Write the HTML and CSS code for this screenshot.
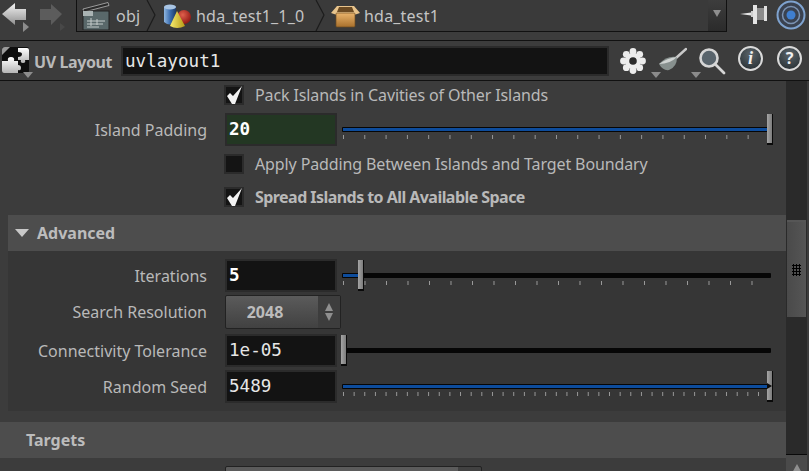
FILE: index.html
```html
<!DOCTYPE html>
<html lang="en">
<head>
    <meta charset="UTF-8">
    <meta name="viewport" content="width=device-width, initial-scale=1.0">
    <title>UV Layout</title>
    <link rel="stylesheet" href="styles.css">
</head>
<body>
    <div class="app">
        <!-- network path bar -->
        <div class="navbar">
            <div class="nav-arrows">
                <svg width="32" height="32" viewBox="0 0 32 32">
                    <defs>
                        <linearGradient id="backFill" x1="0" y1="0" x2="0" y2="1">
                            <stop offset="0" stop-color="#f4f4f4"/>
                            <stop offset="1" stop-color="#8f8f8f"/>
                        </linearGradient>
                    </defs>
                    <path d="M2 13 L15 2 V8 H26 V19 H15 V24 Z" fill="url(#backFill)"/>
                    <path d="M23 21 L29 26 L23 31 Z" fill="#8c8c8c"/>
                </svg>
                <svg width="32" height="32" viewBox="0 0 32 32">
                    <path d="M25 13 L14 3 V8 H3 V19 H14 V24 Z" fill="#5c5c5c"/>
                    <path d="M23 22 L28 26 L23 30 Z" fill="#484848"/>
                </svg>
            </div>
            <div class="pathbar">
                <div class="crumb crumb-obj">
                    <svg width="28" height="28" viewBox="0 0 28 28">
                        <path d="M1 7 L26 0.5 L27 3.5 L2 10 Z" fill="#2b2b2b" stroke="#b5b5b5" stroke-width="0.8"/>
                        <rect x="1" y="9" width="26" height="19" fill="#59686a" stroke="#222"/>
                        <rect x="1" y="9" width="10" height="5" fill="#aab4b4"/>
                        <path d="M5 19 H23 M5 22 H21 M5 25 H17 M9 16 V24 M15 17 V23" stroke="#c5cccb" stroke-width="1"/>
                    </svg>
                    <span>obj</span>
                </div>
                <svg class="chevron" width="10" height="31" viewBox="0 0 10 31">
                    <path d="M1 0 L9 15 L1 31" fill="none" stroke="#1c1c1c" stroke-width="1.2"/>
                </svg>
                <div class="crumb crumb-hda">
                    <svg width="30" height="28" viewBox="0 0 30 28">
                        <defs>
                            <linearGradient id="canFill" x1="0" y1="0" x2="1" y2="0">
                                <stop offset="0" stop-color="#8fb6e0"/>
                                <stop offset="0.5" stop-color="#3d6fb0"/>
                                <stop offset="1" stop-color="#1d3a66"/>
                            </linearGradient>
                            <radialGradient id="ballFill" cx="0.4" cy="0.35" r="0.7">
                                <stop offset="0" stop-color="#e0604c"/>
                                <stop offset="1" stop-color="#8c1512"/>
                            </radialGradient>
                            <linearGradient id="coneFill" x1="0" y1="0" x2="1" y2="0">
                                <stop offset="0" stop-color="#f7ec70"/>
                                <stop offset="1" stop-color="#b79b16"/>
                            </linearGradient>
                        </defs>
                        <path d="M1 5 V20 Q7 25 13 20 V5 Z" fill="url(#canFill)"/>
                        <ellipse cx="7" cy="5" rx="6" ry="2.6" fill="#a9c5e4"/>
                        <circle cx="21" cy="15" r="7" fill="url(#ballFill)"/>
                        <path d="M14 9 L7 24 Q14 28 22 24 Z" fill="url(#coneFill)"/>
                    </svg>
                    <span>hda_test1_1_0</span>
                </div>
                <svg class="chevron" width="10" height="31" viewBox="0 0 10 31">
                    <path d="M1 0 L9 15 L1 31" fill="none" stroke="#1c1c1c" stroke-width="1.2"/>
                </svg>
                <div class="crumb crumb-box">
                    <svg width="29" height="28" viewBox="0 0 29 28">
                        <defs>
                            <linearGradient id="boxFill" x1="0" y1="0" x2="0" y2="1">
                                <stop offset="0" stop-color="#eab46c"/>
                                <stop offset="1" stop-color="#a8702c"/>
                            </linearGradient>
                        </defs>
                        <path d="M6 4 H23 L29 11 L23 13 H6 L0 11 Z" fill="#e8c48c"/>
                        <path d="M8 5 H21 L23 10 H6 Z" fill="#6b4a22"/>
                        <rect x="5" y="11" width="19" height="14" rx="1" fill="url(#boxFill)" stroke="#6d4a1f" stroke-width="0.7"/>
                    </svg>
                    <span>hda_test1</span>
                </div>
                <div class="path-menu"><span class="tri-down"></span></div>
            </div>
            <div class="nav-right">
                <svg width="29" height="26" viewBox="0 0 29 26">
                    <path d="M1 13 L12 11.5 V14.5 Z" fill="#e6e6e6"/>
                    <path d="M12 10 H15 V16 H12 Z" fill="#cfcfcf"/>
                    <rect x="14" y="4" width="4" height="19" fill="#e4e4e4"/>
                    <rect x="18" y="7" width="7" height="12" fill="#8c8c8c"/>
                    <rect x="25" y="5" width="3" height="15" fill="#e0e0e0"/>
                </svg>
                <svg width="30" height="30" viewBox="0 0 30 30">
                    <circle cx="15" cy="15" r="13.5" fill="#3a4250" stroke="#7fa3cf" stroke-width="2"/>
                    <circle cx="15" cy="15" r="8.5" fill="none" stroke="#7b93b3" stroke-width="1.5"/>
                    <circle cx="15" cy="15" r="4.5" fill="#3f7fd0"/>
                </svg>
            </div>
        </div>

        <!-- node name bar -->
        <div class="nodebar">
            <div class="node-icon">
                <svg width="29" height="29" viewBox="0 0 29 29">
                    <defs>
                        <linearGradient id="pieceFill" x1="0" y1="0" x2="0" y2="1">
                            <stop offset="0" stop-color="#ffffff"/>
                            <stop offset="1" stop-color="#b5b5b5"/>
                        </linearGradient>
                    </defs>
                    <rect x="1" y="1" width="27" height="26" rx="2" fill="#0e0e0e"/>
                    <path d="M1 4 Q1 1 4 1 H9 L1 9 Z" fill="#9a9a9a"/>
                    <path d="M17 2 H26 Q28 2 28 4 V14 H24 Q25 17 22 17 Q19 17 20 14 H17 V11 Q21 11 21 8 Q21 6 17 6 Z" fill="url(#pieceFill)"/>
                    <path d="M1 15 H7 Q6 11 10 11 Q14 11 13 15 H17 V19 Q20 19 20 22 Q20 25 17 24 V27 H3 Q1 27 1 25 Z" fill="url(#pieceFill)"/>
                </svg>
                <span class="tri-corner"></span>
            </div>
            <div class="node-type">UV Layout</div>
            <div class="field node-name">uvlayout1</div>
            <div class="node-tools">
                <div class="tool tool-gear">
                    <svg width="28" height="28" viewBox="0 0 28 28">
                        <g fill="#ececec">
                            <circle cx="14" cy="4.5" r="3.4"/>
                            <circle cx="14" cy="23.5" r="3.4"/>
                            <circle cx="4.5" cy="14" r="3.4"/>
                            <circle cx="23.5" cy="14" r="3.4"/>
                            <circle cx="7.3" cy="7.3" r="3.4"/>
                            <circle cx="20.7" cy="7.3" r="3.4"/>
                            <circle cx="7.3" cy="20.7" r="3.4"/>
                            <circle cx="20.7" cy="20.7" r="3.4"/>
                            <circle cx="14" cy="14" r="8"/>
                        </g>
                        <circle cx="14" cy="14" r="3.8" fill="#2b2b2b"/>
                    </svg>
                    <span class="tri-corner"></span>
                </div>
                <div class="tool tool-wok">
                    <svg width="29" height="26" viewBox="0 0 29 26">
                        <path d="M18 11 L28 2" stroke="#c9c9c9" stroke-width="2.4" stroke-linecap="round"/>
                        <path d="M1 17 Q9 8 19 10 Q19 20 11 23 Q5 24 1 17 Z" fill="#87908e"/>
                        <path d="M1 17 Q9 11 19 10 Q12 17 1 17 Z" fill="#cfd3d2"/>
                    </svg>
                    <span class="tri-corner"></span>
                </div>
                <div class="tool tool-search">
                    <svg width="28" height="28" viewBox="0 0 28 28">
                        <circle cx="11" cy="11" r="8.5" fill="#59646c" stroke="#d6d6d6" stroke-width="2.6"/>
                        <path d="M17 17 L26 26" stroke="#d6d6d6" stroke-width="2.8" stroke-linecap="round"/>
                    </svg>
                </div>
                <div class="tool tool-round tool-info">i</div>
                <div class="tool tool-round tool-help">?</div>
            </div>
        </div>

        <div class="main">
            <div class="params">
                <div class="row row-first">
                    <div class="label"></div>
                    <div class="check checked"></div>
                    <div class="check-label">Pack Islands in Cavities of Other Islands</div>
                </div>
                <div class="row">
                    <div class="label">Island Padding</div>
                    <div class="field num field-green"><b>20</b></div>
                    <div class="slider ticks-wide">
                        <div class="track"><div class="fill fill-full"></div></div>
                        <div class="handle handle-end"></div>
                    </div>
                </div>
                <div class="row">
                    <div class="label"></div>
                    <div class="check"></div>
                    <div class="check-label">Apply Padding Between Islands and Target Boundary</div>
                </div>
                <div class="row row-spread">
                    <div class="label"></div>
                    <div class="check checked"></div>
                    <div class="check-label check-label-bold">Spread Islands to All Available Space</div>
                </div>

                <div class="folder">
                    <div class="folder-head"><span class="tri-open"></span>Advanced</div>
                    <div class="folder-body">
                        <div class="row row-first">
                            <div class="label">Iterations</div>
                            <div class="field num"><b>5</b></div>
                            <div class="slider ticks-iter">
                                <div class="track"><div class="fill fill-iter"></div></div>
                                <div class="handle handle-iter"></div>
                            </div>
                        </div>
                        <div class="row row-menu">
                            <div class="label">Search Resolution</div>
                            <div class="menu">
                                <div class="menu-value">2048</div>
                                <div class="menu-arrows">
                                    <span class="arrow-up"></span>
                                    <span class="arrow-down"></span>
                                </div>
                            </div>
                        </div>
                        <div class="row row-tol">
                            <div class="label">Connectivity Tolerance</div>
                            <div class="field num">1e-05</div>
                            <div class="slider">
                                <div class="track"></div>
                                <div class="handle handle-start"></div>
                            </div>
                        </div>
                        <div class="row row-seed">
                            <div class="label">Random Seed</div>
                            <div class="field num">5489</div>
                            <div class="slider ticks-fine">
                                <div class="track"><div class="fill fill-full"></div></div>
                                <div class="handle handle-end handle-mark"></div>
                            </div>
                        </div>
                    </div>
                </div>

                <div class="section-head">Targets</div>
                <div class="row-cut"><div class="cut-menu"></div></div>
            </div>

            <div class="scrollbar">
                <div class="scroll-thumb"><div class="grip"></div></div>
                <div class="scroll-btn"><span class="arrow-scroll"></span></div>
            </div>
        </div>
    </div>
</body>
</html>
```

FILE: styles.css
```css
html, body {
    margin: 0;
    padding: 0;
    background-color: #3c3c3c;
}

.app {
    width: 809px;
    height: 471px;
    overflow: hidden;
    display: flex;
    flex-direction: column;
    font-family: "Noto Sans", sans-serif;
    font-size: 16px;
    line-height: 20px;
    color: #b9b9b9;
}

/* top bar */
.navbar {
    height: 40px;
    flex: none;
    display: flex;
    border-bottom: 1px solid #111;
}

.nav-arrows {
    width: 76px;
    padding-top: 1px;
    display: flex;
    gap: 5px;
    box-sizing: border-box;
}

.pathbar {
    width: 651px;
    height: 32px;
    box-sizing: border-box;
    display: flex;
    align-items: center;
    position: relative;
    border-left: 1px solid #111;
    border-right: 1px solid #111;
    border-bottom: 1px solid #111;
    background-color: #3a3a3a;
}

.crumb {
    display: flex;
    align-items: center;
    gap: 6px;
    color: #c4c4c4;
    letter-spacing: 0.2px;
    white-space: nowrap;
}

.crumb-obj { padding-left: 5px; width: 64px; }
.crumb-hda { padding-left: 7px; width: 152px; gap: 3px; }
.crumb-box { padding-left: 6px; gap: 4px; }

.chevron { flex: none; }

.path-menu {
    position: absolute;
    right: 0;
    top: 0;
    bottom: 0;
    width: 18px;
    background: linear-gradient(#3d3d3d, #2b2b2b);
}

.tri-down {
    position: absolute;
    left: 5px;
    top: 10px;
    border-left: 4px solid transparent;
    border-right: 4px solid transparent;
    border-top: 7px solid #8e8e8e;
}

.nav-right {
    margin-left: 12px;
    display: flex;
    gap: 8px;
    align-items: flex-start;
}

.nav-right svg:first-child { margin-top: 1px; }

/* node bar */
.nodebar {
    height: 39px;
    flex: none;
    display: flex;
    align-items: center;
    border-bottom: 1px solid #111;
}

.node-icon {
    width: 29px;
    height: 29px;
    margin-left: 1px;
    position: relative;
}

.tri-corner {
    position: absolute;
    right: -3px;
    bottom: -3px;
    border-left: 5px solid transparent;
    border-right: 5px solid transparent;
    border-top: 6px solid #8c8c8c;
}

.node-type {
    width: 91px;
    padding: 2px 0 0 4px;
    box-sizing: border-box;
    font-weight: 700;
    letter-spacing: -0.4px;
    white-space: nowrap;
}

.field {
    box-sizing: border-box;
    background-color: #131313;
    border: 2px solid #2b2b2b;
    color: #e6e6e6;
    font-family: "DejaVu Sans Mono", monospace;
    font-size: 17.6px;
}

.node-name {
    width: 488px;
    height: 30px;
    line-height: 26px;
    padding-left: 2px;
}

.node-tools {
    margin-left: 10px;
    display: flex;
    align-items: center;
}

.tool {
    position: relative;
    height: 28px;
}

.tool-gear { width: 39px; }
.tool-wok { width: 40px; }
.tool-search { width: 40px; }

.tool-round {
    box-sizing: border-box;
    width: 25px;
    height: 25px;
    border-radius: 50%;
    border: 2px solid #dadada;
    background: radial-gradient(circle at 50% 30%, #5a646a, #232a2e);
    color: #f0f0f0;
    text-align: center;
    margin-top: -4px;
}

.tool-info {
    margin-right: 14px;
    font-family: "Liberation Serif", serif;
    font-style: italic;
    font-weight: 700;
    font-size: 18px;
    line-height: 21px;
}

.tool-help {
    font-weight: 700;
    font-size: 16px;
    line-height: 20px;
}

/* parameter area */
.main {
    flex: 1;
    display: flex;
    min-height: 0;
}

.params {
    width: 786px;
    flex: none;
    padding-top: 4px;
    box-sizing: border-box;
}

.row {
    display: flex;
    align-items: center;
    margin-top: 8px;
}

.row-first { margin-top: 0; }
.row-spread { margin-top: 13px; }
.row-menu { margin-top: 3px; }
.row-tol { margin-top: 5px; }
.row-seed { margin-top: 3px; }

.label {
    width: 207px;
    margin-right: 18px;
    flex: none;
    text-align: right;
    white-space: nowrap;
}

.check {
    width: 20px;
    height: 20px;
    box-sizing: border-box;
    margin-left: -1px;
    border: 2px solid #2b2b2b;
    background-color: #141414;
    position: relative;
}

.checked::after {
    content: "";
    position: absolute;
    left: 1px;
    top: -1px;
    width: 15px;
    height: 18px;
    background-color: #f2f2f2;
    clip-path: polygon(0 10px, 3px 7px, 6px 10px, 15px 0, 8px 18px, 5px 18px);
}

.check-label {
    margin-left: 11px;
    letter-spacing: -0.12px;
    white-space: nowrap;
}

.check-label-bold {
    font-weight: 700;
    letter-spacing: -0.55px;
}

.num {
    width: 112px;
    height: 33px;
    flex: none;
    line-height: 29px;
    padding-left: 2px;
}

.num b { color: #fff; }

.field-green { background-color: #233723; }

/* sliders */
.slider {
    position: relative;
    width: 429px;
    height: 33px;
    margin-left: 5px;
}

.ticks-wide::after,
.ticks-iter::after,
.ticks-fine::after {
    content: "";
    position: absolute;
    left: 1px;
    right: 5px;
    top: 22px;
    height: 4px;
    background-repeat: repeat-x;
}

.ticks-wide::after {
    background-image: linear-gradient(to right, #9a9a9a 1px, transparent 1px);
    background-size: 21.3px 4px;
}

.ticks-iter::after {
    background-image: linear-gradient(to right, #9a9a9a 1px, transparent 1px);
    background-size: 21.5px 4px;
}

.ticks-fine::after {
    background-image: linear-gradient(to right, #9a9a9a 1px, transparent 1px);
    background-size: 10.65px 4px;
}

.track {
    position: absolute;
    left: 0;
    right: 0;
    top: 14px;
    height: 5px;
    background-color: #060606;
    border-radius: 1px;
}

.fill {
    position: absolute;
    left: 1px;
    top: 1px;
    height: 3px;
    background-color: #0d4c9c;
}

.fill-full { right: 1px; }
.fill-iter { width: 15px; }

.handle {
    position: absolute;
    top: 1px;
    width: 5px;
    height: 29px;
    z-index: 1;
    background: linear-gradient(to right, #a5a5a5, #7c7c7c);
    border-bottom: 2px solid #0a0a0a;
    border-right: 1px solid #0a0a0a;
}

.handle-end { right: -2px; }
.handle-iter { left: 16px; }
.handle-start { left: -1px; }

.handle-mark::before {
    content: "";
    position: absolute;
    left: 0;
    top: 12px;
    border-left: 5px solid #0a0a0a;
    border-top: 3px solid transparent;
    border-bottom: 3px solid transparent;
}

/* folders */
.folder {
    margin: 8px 0 0 8px;
}

.folder-head,
.section-head {
    height: 36px;
    line-height: 36px;
    font-weight: 700;
    background-color: #4d4d4d;
    color: #bcbcbc;
}

.folder-head {
    display: flex;
    align-items: center;
    gap: 8px;
    padding-left: 7px;
}

.tri-open {
    border-left: 7px solid transparent;
    border-right: 7px solid transparent;
    border-top: 8px solid #c8c8c8;
}

.folder-body {
    padding: 8px 0;
    background-color: #363636;
}

.folder-body .label { width: 199px; }

.section-head {
    margin-top: 11px;
    padding-left: 26px;
}

.menu {
    width: 116px;
    height: 34px;
    box-sizing: border-box;
    display: flex;
    border: 1px solid #222;
    border-radius: 2px;
    background: linear-gradient(#5b5b5b, #414141);
    color: #bcbcbc;
    font-weight: 700;
}

.menu-value {
    flex: 1;
    padding-right: 14px;
    text-align: center;
    line-height: 32px;
}

.menu-arrows {
    width: 22px;
    display: flex;
    flex-direction: column;
    align-items: center;
    justify-content: center;
    gap: 2px;
    background-color: #3d3d3d;
}

.arrow-up,
.arrow-down {
    border-left: 4px solid transparent;
    border-right: 4px solid transparent;
}

.arrow-up { border-bottom: 8px solid #8f8f8f; }
.arrow-down { border-top: 8px solid #8f8f8f; }

.row-cut {
    margin-top: 8px;
    padding-left: 225px;
}

.cut-menu {
    width: 257px;
    height: 30px;
    box-sizing: border-box;
    border: 1px solid #222;
    border-radius: 2px;
    background: linear-gradient(to right, #5b5b5b 232px, #414141 232px);
}

/* scrollbar */
.scrollbar {
    position: relative;
    width: 21px;
    background-color: #2a2a2a;
}

.scroll-thumb {
    position: absolute;
    left: 1px;
    right: 1px;
    top: 139px;
    height: 97px;
    box-sizing: border-box;
    border-top: 2px solid #565656;
    background: linear-gradient(to right, #4a4a4a, #555);
    display: flex;
    align-items: center;
    justify-content: center;
}

.grip {
    width: 9px;
    height: 12px;
    background-image: radial-gradient(#000 1.2px, transparent 1.4px);
    background-size: 3px 3px;
}

.scroll-btn {
    position: absolute;
    left: 0;
    right: 0;
    top: 373px;
    height: 17px;
    border-top: 1px solid #0a0a0a;
    background-color: #4a4a4a;
    display: flex;
    justify-content: center;
}

.arrow-scroll {
    margin-top: 9px;
    height: 0;
    border-left: 5px solid transparent;
    border-right: 5px solid transparent;
    border-bottom: 9px solid #8f8f8f;
}
```
